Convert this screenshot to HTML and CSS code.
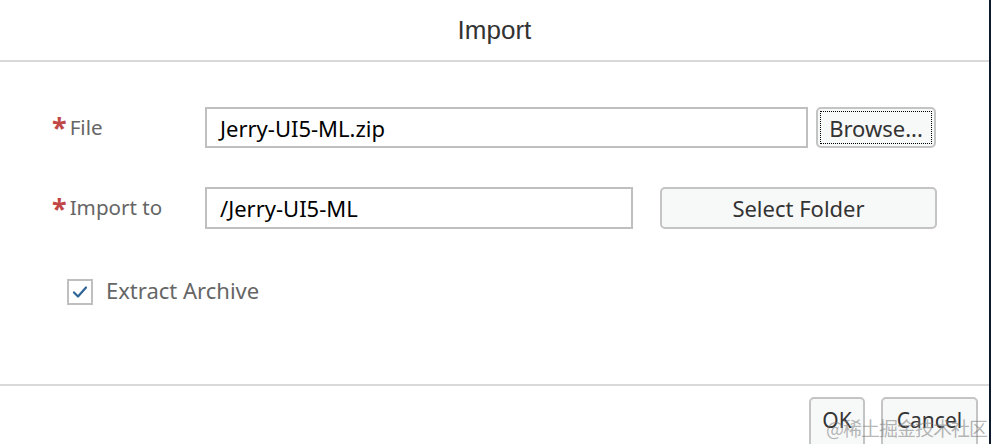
FILE: index.html
```html
<!DOCTYPE html>
<html>
<head>
<meta charset="utf-8">
<link rel="stylesheet" href="styles.css">
</head>
<body>
<div class="dialog">
  <header class="dlg-header"><h1 class="title">Import</h1></header>
  <main class="dlg-content">
    <div class="form-row row-file">
      <label class="label"><span class="req">*</span>File</label>
      <div class="input input-file">Jerry-UI5-ML.zip</div>
      <button class="btn btn-browse"><span class="focus">Browse...</span></button>
    </div>
    <div class="form-row row-folder">
      <label class="label"><span class="req">*</span>Import to</label>
      <div class="input input-folder">/Jerry-UI5-ML</div>
      <button class="btn btn-folder">Select Folder</button>
    </div>
    <div class="check-row">
      <span class="checkbox">
        <svg width="16" height="14" viewBox="0 0 16 14"><path d="M2 7.5 L6 11.5 L14 2.5" fill="none" stroke="#2f6496" stroke-width="2.2" stroke-linecap="round" stroke-linejoin="round"/></svg>
      </span>
      <span class="check-label">Extract Archive</span>
    </div>
  </main>
  <footer class="dlg-footer">
    <button class="btn btn-ok">OK</button>
    <button class="btn btn-cancel">Cancel</button>
    <span class="watermark">@稀土掘金技术社区</span>
  </footer>
</div>
</body>
</html>
```

FILE: styles.css
```css
* { box-sizing: border-box; }
html, body { margin: 0; padding: 0; background: #fff; }
body {
  width: 991px;
  height: 444px;
  overflow: hidden;
  font-family: "Noto Sans", "Open Sans", sans-serif;
}
.dialog {
  position: relative;
  width: 991px;
  height: 444px;
  border-right: 2px solid #0c1a2b;
  background: #fff;
}
.dlg-header {
  height: 62px;
  border-bottom: 2px solid #d9d9d9;
  display: flex;
  align-items: center;
  justify-content: center;
}
.title {
  margin: 0;
  font-family: "Liberation Sans", Arial, sans-serif;
  font-weight: normal;
  font-size: 25px;
  color: #333;
  padding-bottom: 0;
  transform: scaleX(1.04);
}
.dlg-content {
  height: 324px;
  border-bottom: 2px solid #d9d9d9;
  padding-top: 45px;
}
.form-row {
  display: flex;
  align-items: center;
  height: 41px;
}
.row-folder { margin-top: 39px; height: 42px; }
.label {
  width: 205px;
  padding-left: 52px;
  font-size: 20.6px;
  color: #666;
  display: flex;
  align-items: center;
  position: relative;
  top: -1px;
}
.req {
  color: #c14646;
  font-weight: bold;
  font-size: 27px;
  line-height: 1;
  margin-right: 3px;
  position: relative;
  top: 1px;
}
.input {
  height: 100%;
  border: 2px solid #bfbfbf;
  padding-left: 13px;
  font-size: 22px;
  color: #000;
  display: flex;
  align-items: center;
}
.input-file { width: 603px; }
.input-folder { width: 428px; }
.btn {
  font-family: "Noto Sans", "Open Sans", sans-serif;
  font-size: 22px;
  color: #333;
  background: #f7f8f8;
  border: 2px solid #c4c4c4;
  border-radius: 5px;
  height: 100%;
  padding: 0;
  display: flex;
  align-items: center;
  justify-content: center;
}
.btn-browse {
  width: 120px;
  margin-left: 8px;
  padding: 2px;
}
.btn-browse .focus {
  width: 100%;
  height: 100%;
  border: 1px dotted #000;
  display: flex;
  align-items: center;
  justify-content: center;
}
.btn-folder {
  width: 277px;
  margin-left: 27px;
}
.check-row {
  display: flex;
  align-items: center;
  margin-top: 48px;
  padding-left: 67px;
}
.checkbox {
  width: 26px;
  height: 26px;
  border: 2px solid #bfbfbf;
  display: flex;
  align-items: center;
  justify-content: center;
}
.check-label {
  margin-left: 13px;
  font-size: 22px;
  color: #666;
  position: relative;
  top: -2px;
}
.dlg-footer {
  display: flex;
  padding-top: 11px;
  padding-left: 809px;
  gap: 16px;
}
.btn-ok { width: 56px; height: 56px; font-size: 21px; align-items: flex-start; padding-top: 7px; }
.btn-cancel { width: 97px; height: 56px; font-size: 21px; align-items: flex-start; padding-top: 7px; }
.watermark {
  position: absolute;
  left: 826px;
  top: 414px;
  font-family: "Noto Sans CJK SC", "Noto Sans", sans-serif;
  font-size: 19px;
  color: rgba(120, 120, 120, 0.55);
  letter-spacing: -1px;
  white-space: nowrap;
}
```
